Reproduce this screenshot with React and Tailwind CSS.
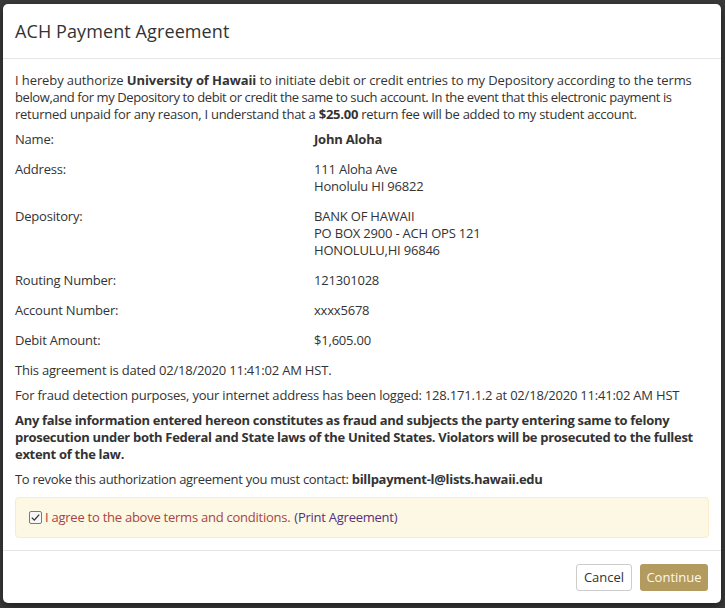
import React from 'react'

const rows = [
  { label: 'Name:', lines: ['John Aloha'], bold: true },
  { label: 'Address:', lines: ['111 Aloha Ave', 'Honolulu HI 96822'] },
  { label: 'Depository:', lines: ['BANK OF HAWAII', 'PO BOX 2900 - ACH OPS 121', 'HONOLULU,HI 96846'] },
  { label: 'Routing Number:', lines: ['121301028'] },
  { label: 'Account Number:', lines: ['xxxx5678'] },
  { label: 'Debit Amount:', lines: ['$1,605.00'] },
]

function Check() {
  return (
    <svg width="13" height="13" viewBox="0 0 13 13" className="shrink-0">
      <rect x="0.5" y="0.5" width="12" height="12" rx="1.5" fill="#f7f7f7" stroke="#7a7a7a" />
      <path d="M2.8 6.6 L5.3 9.1 L10.2 3.6" fill="none" stroke="#333" strokeWidth="1.3" />
    </svg>
  )
}

export default function App() {
  return (
    <div className="w-[725px] h-[608px] bg-[#3a3a3a] pt-[4px] pl-[3px] pr-[4px] pb-[5px] font-['Open_Sans',sans-serif] text-[#333]">
      <div className="h-full bg-white rounded-[5px] flex flex-col shadow-[0_3px_9px_rgba(0,0,0,0.5)]">

        {/* header */}
        <div className="h-[55px] shrink-0 flex items-center px-[12px] border-b border-[#e5e5e5]">
          <h4 className="text-[18px] leading-none tracking-[0.1px]">ACH Payment Agreement</h4>
        </div>

        {/* body */}
        <div className="flex-1 px-[12px] pt-[13px] text-[13px] leading-[17px]">
          <p className="mb-[8px]">
            <span className="tracking-[-0.1px]">I hereby authorize <b>University of Hawaii</b> to initiate debit or credit entries to my Depository according to the terms</span><br />
            <span className="tracking-[-0.4px]">below,and for my Depository to debit or credit the same to such account. In the event that this electronic payment is</span><br />
            <span className="tracking-[-0.25px]">returned unpaid for any reason, I understand that a <b>$25.00</b> return fee will be added to my student account.</span>
          </p>

          {rows.map(r => (
            <div key={r.label} className="grid grid-cols-[299px_1fr] mb-[13px] tracking-[-0.2px]">
              <div>{r.label}</div>
              <div className={r.bold ? 'font-bold' : ''}>
                {r.lines.map(l => <div key={l}>{l}</div>)}
              </div>
            </div>
          ))}

          <p className="mb-[8px] tracking-[-0.2px]">This agreement is dated 02/18/2020 11:41:02 AM HST.</p>
          <p className="mb-[8px] tracking-[-0.2px]">For fraud detection purposes, your internet address has been logged: 128.171.1.2 at 02/18/2020 11:41:02 AM HST</p>
          <p className="font-bold mb-[8px] tracking-[-0.3px]">
            Any false information entered hereon constitutes as fraud and subjects the party entering same to felony prosecution under both Federal and State laws of the United States. Violators will be prosecuted to the fullest extent of the law.
          </p>
          <p className="mb-[9px] tracking-[-0.3px]">To revoke this authorization agreement you must contact: <b>billpayment-l@lists.hawaii.edu</b></p>

          <div className="h-[41px] flex items-center pl-[13px] bg-[#fcf8e3] border border-[#faebcc] rounded-[4px] tracking-[-0.25px]">
            <Check />
            <span className="ml-[3px] text-[#a94442]">I agree to the above terms and conditions.</span>
            <span className="ml-[4px] text-[#56317f]">(Print Agreement)</span>
          </div>
        </div>

        {/* footer */}
        <div className="h-[53px] shrink-0 border-t border-[#e5e5e5] flex items-center justify-end gap-[8px] pr-[13px] pt-[1px]">
          <button className="h-[27px] w-[56px] rounded-[3px] border border-[#ccc] bg-white text-[13px] text-[#333]">Cancel</button>
          <button className="h-[27px] w-[68px] rounded-[3px] bg-[#b39a5f] text-[13px] text-[#fdf8ec]">Continue</button>
        </div>
      </div>
    </div>
  )
}
